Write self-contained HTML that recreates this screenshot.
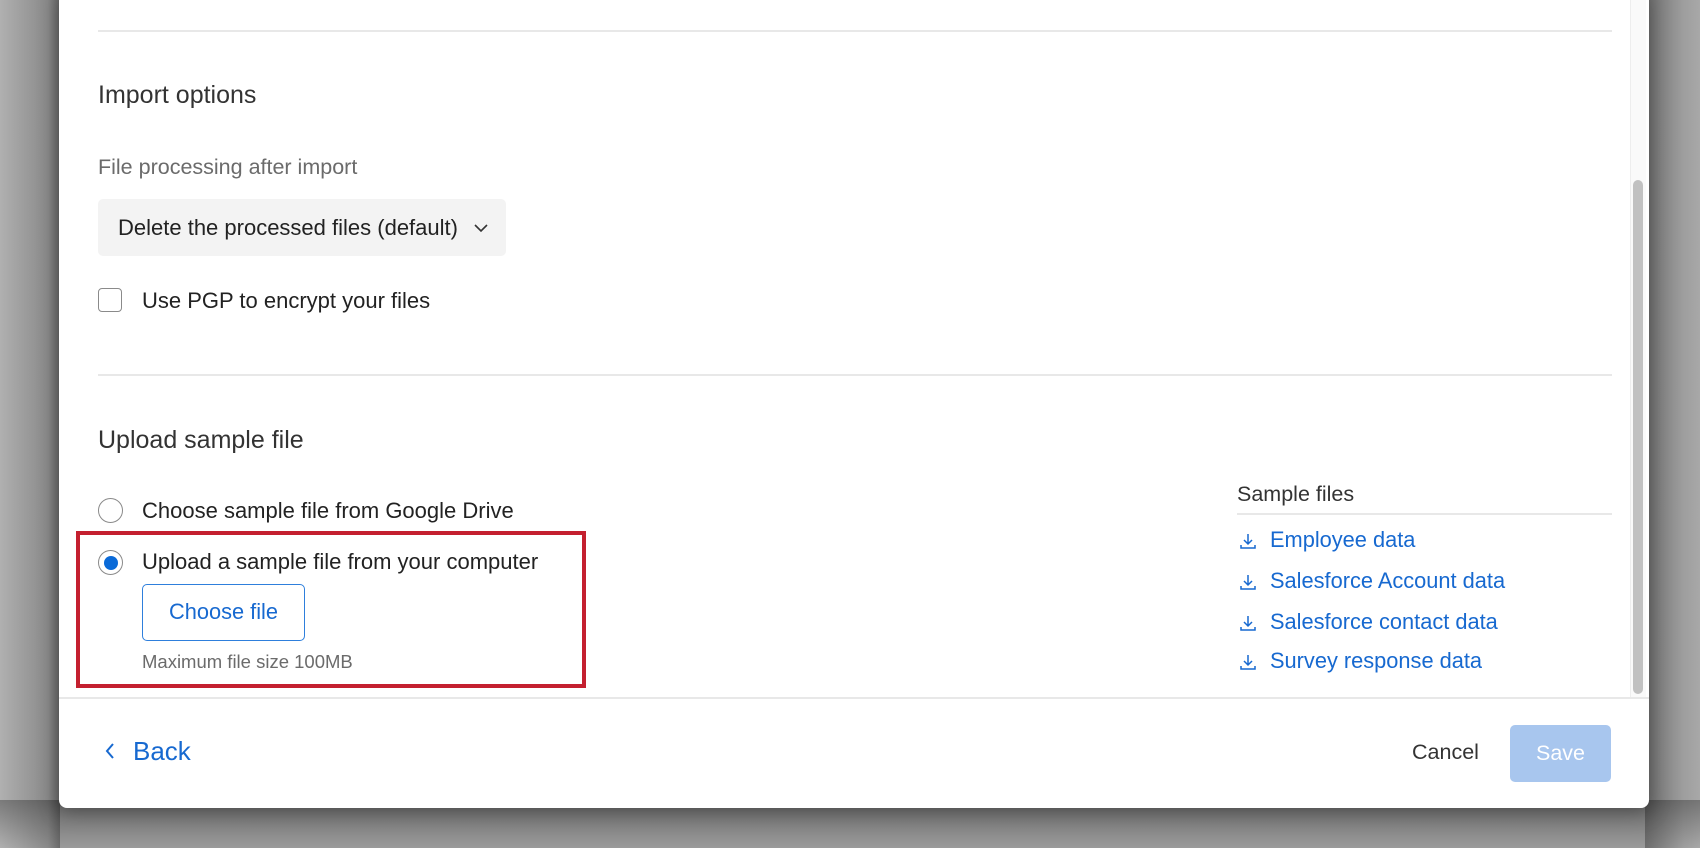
<!DOCTYPE html>
<html><head><meta charset="utf-8"><style>
*{margin:0;padding:0;box-sizing:border-box}
body{width:1700px;height:848px;overflow:hidden;background:#9a9a9a;font-family:"Liberation Sans",sans-serif;position:relative}
.bgl{position:absolute;left:0;top:0;width:60px;height:848px;background:linear-gradient(90deg,#b0b0b0,#8a8a8a 80%,#6a6a6a)}
.bgr{position:absolute;left:1645px;top:0;width:55px;height:848px;background:linear-gradient(90deg,#6e6e6e,#9e9e9e 70%,#a8a8a8)}
.bgb{position:absolute;left:0;top:800px;width:1700px;height:48px;background:linear-gradient(180deg,rgba(0,0,0,.3),rgba(0,0,0,0))}
.modal{position:absolute;left:59px;top:-10px;width:1590px;height:818px;background:#fff;border-radius:0 0 8px 8px;box-shadow:0 4px 20px rgba(0,0,0,.35)}
.a{position:absolute;white-space:nowrap}
.hr{position:absolute;height:2px;background:#e8e8e8}
.h{font-size:25px;color:#333}
.t{font-size:22px;color:#222}
.lnk{font-size:21.8px;color:#1769d0}
</style></head><body>
<div class="bgl"></div><div class="bgr"></div><div class="bgb"></div>
<div class="modal"></div>
<div class="hr" style="left:98px;top:30px;width:1514px"></div>
<div class="a h" style="left:98px;top:81px">Import options</div>
<div class="a" style="left:98px;top:155px;font-size:21.5px;color:#6b6b6b">File processing after import</div>
<div class="a" style="left:98px;top:199px;width:408px;height:57px;background:#f3f3f3;border-radius:5px"></div>
<div class="a t" style="left:118px;top:215px">Delete the processed files (default)</div>
<svg class="a" style="left:473px;top:222px" width="16" height="12" viewBox="0 0 16 12"><path d="M2 3l6 6 6-6" fill="none" stroke="#333" stroke-width="1.6"/></svg>
<div class="a" style="left:98px;top:288px;width:24px;height:24px;border:1.5px solid #8a8a8a;border-radius:4px"></div>
<div class="a t" style="left:142px;top:288px">Use PGP to encrypt your files</div>
<div class="hr" style="left:98px;top:374px;width:1514px"></div>
<div class="a h" style="left:98px;top:426px">Upload sample file</div>
<div class="a" style="left:98px;top:498px;width:25px;height:25px;border:1.5px solid #8a8a8a;border-radius:50%"></div>
<div class="a t" style="left:142px;top:498px">Choose sample file from Google Drive</div>
<div class="a" style="left:98px;top:550px;width:25px;height:25px;border:1.5px solid #8a8a8a;border-radius:50%"></div>
<div class="a" style="left:103.5px;top:555.5px;width:14px;height:14px;background:#0a6ad8;border-radius:50%"></div>
<div class="a t" style="left:142px;top:549px">Upload a sample file from your computer</div>
<div class="a" style="left:142px;top:584px;width:163px;height:57px;border:1.5px solid #2e7fdc;border-radius:5px"></div>
<div class="a lnk" style="left:142px;top:599px;width:163px;text-align:center">Choose file</div>
<div class="a" style="left:142px;top:651px;font-size:18.5px;color:#6b6b6b">Maximum file size 100MB</div>
<div class="a" style="left:76px;top:531px;width:510px;height:157px;border:4px solid #c4202f"></div>
<div class="a" style="left:1237px;top:482px;font-size:21.5px;color:#333">Sample files</div>
<div class="hr" style="left:1237px;top:513px;width:375px"></div>
<svg width="0" height="0" style="position:absolute"><defs><g id="dl"><path d="M9 2v10M5 8l4 4 4-4M2 13v3h14v-3" fill="none" stroke="#1769d0" stroke-width="1.5"/></g></defs></svg>
<svg class="a" style="left:1239px;top:532px" width="18" height="18"><use href="#dl"/></svg>
<div class="a lnk" style="left:1270px;top:527px">Employee data</div>
<svg class="a" style="left:1239px;top:573px" width="18" height="18"><use href="#dl"/></svg>
<div class="a lnk" style="left:1270px;top:568px">Salesforce Account data</div>
<svg class="a" style="left:1239px;top:614px" width="18" height="18"><use href="#dl"/></svg>
<div class="a lnk" style="left:1270px;top:609px">Salesforce contact data</div>
<svg class="a" style="left:1239px;top:653px" width="18" height="18"><use href="#dl"/></svg>
<div class="a lnk" style="left:1270px;top:648px">Survey response data</div>
<div class="a" style="left:1630px;top:0;width:16px;height:698px;background:#fafafa;border-left:1px solid #eee"></div>
<div class="a" style="left:1633px;top:180px;width:10px;height:514px;background:#c1c1c1;border-radius:5px"></div>
<div class="hr" style="left:59px;top:697px;width:1590px"></div>
<svg class="a" style="left:104px;top:742px" width="12" height="18" viewBox="0 0 12 18"><path d="M9 2L3 9l6 7" fill="none" stroke="#1769d0" stroke-width="2"/></svg>
<div class="a" style="left:133px;top:736px;font-size:26px;color:#1769d0">Back</div>
<div class="a" style="left:1412px;top:740px;font-size:21.5px;color:#333">Cancel</div>
<div class="a" style="left:1510px;top:725px;width:101px;height:57px;background:#a8c6ee;border-radius:5px;color:#fff;font-size:21.5px;text-align:center;line-height:57px">Save</div>
</body></html>
